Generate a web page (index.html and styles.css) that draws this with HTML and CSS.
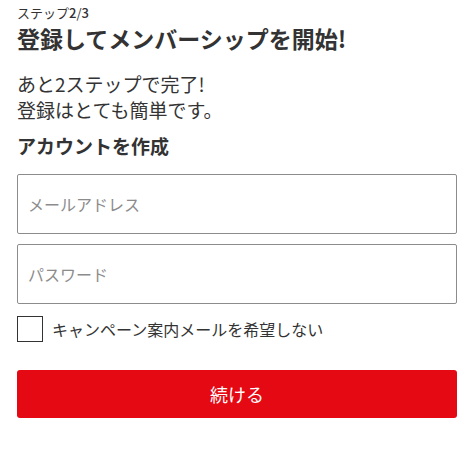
FILE: index.html
```
<!DOCTYPE html>
<html lang="ja">
<head>
    <meta charset="UTF-8">
    <title>登録</title>
<link rel="stylesheet" href="styles.css">
</head>
<body>

<div class="signup">
    <div class="step">ステップ<b>2</b>/<b>3</b></div>
    <h1 class="title">登録してメンバーシップを開始!</h1>

    <p class="lead">あと2ステップで完了!<br>登録はとても簡単です。</p>

    <h2 class="subtitle">アカウントを作成</h2>

    <form class="signup-form">
        <input class="field" type="email" name="email" placeholder="メールアドレス">
        <input class="field" type="password" name="password" placeholder="パスワード">

        <label class="optout">
            <span class="box"></span>
            キャンペーン案内メールを希望しない
        </label>

        <button class="btn" type="submit">続ける</button>
    </form>
</div>

</body>
</html>
```

FILE: styles.css
```
body {
    margin: 0;
    background: #fff;
    color: #333;
    font-family: "Noto Sans CJK JP", "Noto Sans", sans-serif;
}

.signup {
    width: 440px;
    padding: 4px 17px 0 17px;
}

.step {
    font-size: 13px;
    line-height: 18px;
}

.step b {
    font-weight: 500;
}

.title {
    margin: 0;
    font-size: 23px;
    font-weight: 700;
    line-height: 32px;
}

.lead {
    margin: 17px 0 0 0;
    font-size: 19px;
    line-height: 26px;
}

.subtitle {
    margin: 10px 0 0 0;
    font-size: 19px;
    font-weight: 700;
    line-height: 26px;
}

.signup-form {
    margin-top: 15px;
    display: flex;
    flex-direction: column;
}

.field {
    box-sizing: border-box;
    width: 440px;
    height: 60px;
    margin: 0 0 10px 0;
    padding: 0 10px;
    border: 1px solid #8c8c8c;
    border-radius: 2px;
    font-family: inherit;
    font-size: 16px;
    color: #333;
}

.field::placeholder {
    color: #8c8c8c;
}

.optout {
    display: flex;
    align-items: center;
    gap: 9px;
    margin-top: 2px;
    font-size: 16px;
    color: #333;
}

.box {
    box-sizing: border-box;
    width: 26px;
    height: 26px;
    border: 1px solid #333;
    background: #fff;
}

.btn {
    margin-top: 28px;
    width: 440px;
    height: 48px;
    border: none;
    border-radius: 3px;
    background: #e50914;
    color: #fff;
    font-family: inherit;
    font-size: 18px;
    cursor: pointer;
}
```
